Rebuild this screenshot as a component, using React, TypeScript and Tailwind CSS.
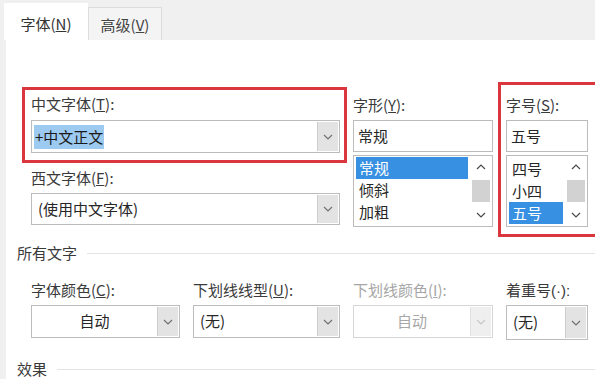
import type { ReactNode } from "react";

const FONT = `font-["Noto_Sans_CJK_SC","Noto_Sans",sans-serif]`;

function Chevron({ up = false, className = "" }: { up?: boolean; className?: string }) {
  return (
    <svg width="10" height="6" viewBox="0 0 10 6" className={className}>
      <path d={up ? "M1 5l4-4 4 4" : "M1 1l4 4 4-4"} fill="none" stroke="currentColor" strokeWidth="1.2" />
    </svg>
  );
}

function Label({ children, disabled = false }: { children: ReactNode; disabled?: boolean }) {
  return (
    <div className={`h-[20px] leading-[20px] whitespace-nowrap ${disabled ? "text-[#a6a6a6]" : "text-[#3a3a3a]"}`}>
      {children}
    </div>
  );
}

function Combo({
  children,
  className = "",
  center = false,
  disabled = false,
}: {
  children: ReactNode;
  className?: string;
  center?: boolean;
  disabled?: boolean;
}) {
  return (
    <div
      className={`flex border bg-white ${disabled ? "border-[#d6d6d6] text-[#a8a8a8]" : "border-[#bcbcbc] text-[#262626]"} ${className}`}
    >
      <div className={`flex flex-1 items-center overflow-hidden whitespace-nowrap ${center ? "justify-center" : "pl-[6px]"}`}>
        {children}
      </div>
      <div
        className={`my-px mr-px flex w-[21px] items-center justify-center border-l ${disabled ? "border-[#e2e2e2] bg-[#efefef] text-[#c8c8c8]" : "border-[#cdcdcd] bg-[#e3e3e3] text-[#707070]"}`}
      >
        <Chevron />
      </div>
    </div>
  );
}

function ListBox({ items, selected, pt }: { items: string[]; selected: number; pt: string }) {
  return (
    <div className="mt-[3px] flex h-[72px] border border-[#bcbcbc] bg-white">
      <div className={`flex-1 px-[2px] ${pt}`}>
        {items.map((it, i) => (
          <div
            key={it}
            className={`h-[22px] pl-[3px] leading-[22px] ${i === selected ? "bg-[#3790e2] text-white" : "text-[#262626]"}`}
          >
            {it}
          </div>
        ))}
      </div>
      <div className="flex w-[22px] flex-col">
        <div className="flex h-[22px] items-center justify-center text-[#4a4a4a]">
          <Chevron up />
        </div>
        <div className="mx-[2px] mt-[2px] h-[22px] bg-[#d2d2d2]" />
        <div className="mt-[2px] flex h-[22px] items-center justify-center text-[#4a4a4a]">
          <Chevron />
        </div>
      </div>
    </div>
  );
}

function Section({ title }: { title: string }) {
  return (
    <div className="flex h-[20px] items-center pl-[11px]">
      <span className="leading-[20px] text-[#3a3a3a]">{title}</span>
      <div className="ml-[10px] h-px flex-1 bg-[#e4e4e4]" />
    </div>
  );
}

export default function App() {
  return (
    <div className={`flex h-[379px] w-[595px] flex-col overflow-hidden bg-[#f0f0f0] text-[15px] ${FONT}`}>
      {/* tabs */}
      <div className="flex h-[40px] shrink-0 items-end pl-[4px]">
        <div className="flex h-[37px] w-[84px] items-center justify-center bg-white pt-[6px] text-[#333]">
          字体(<u>N</u>)
        </div>
        <div className="flex h-[33px] w-[74px] items-center justify-center border border-b-0 border-[#dcdcdc] bg-[#f4f4f4] pt-[3px] text-[#444]">
          高级(<u>V</u>)
        </div>
      </div>

      <div className="ml-[6px] flex-1 overflow-hidden bg-white">
        {/* top block */}
        <div className="mt-[42px] flex items-start pl-[16px]">
          <div className="mt-[5px] w-[325px] shrink-0">
            <div className="border-[3px] border-[#d9363e] pt-[4px] pb-[7px] pl-[6px]">
              <Label>
                中文字体(<u>T</u>):
              </Label>
              <Combo className="mt-[6px] h-[33px] w-[309px]">
                <span className="-ml-[4px] bg-[#9dcaf0] px-[1px] leading-[24px] text-[#1a1a1a]">+中文正文</span>
              </Combo>
            </div>
            <div className="pl-[9px]">
              <div className="mt-[5px]">
                <Label>
                  西文字体(<u>F</u>):
                </Label>
              </div>
              <Combo className="mt-[5px] h-[32px] w-[309px]">(使用中文字体)</Combo>
            </div>
          </div>

          <div className="ml-[6px] w-[140px] shrink-0 pt-[13px]">
            <Label>
              字形(<u>Y</u>):
            </Label>
            <div className="mt-[5px] flex h-[32px] items-center border border-[#bcbcbc] pl-[4px] text-[#262626]">常规</div>
            <ListBox items={["常规", "倾斜", "加粗"]} selected={0} pt="pt-[1px]" />
          </div>

          <div className="ml-[5px] w-[110px] shrink-0 border-[3px] border-[#d9363e] pt-[10px] pb-[7px] pl-[5px]">
            <Label>
              字号(<u>S</u>):
            </Label>
            <div className="w-[82px]">
              <div className="mt-[5px] flex h-[32px] items-center border border-[#bcbcbc] pl-[4px] text-[#262626]">五号</div>
              <ListBox items={["四号", "小四", "五号"]} selected={2} pt="pt-[2px]" />
            </div>
          </div>
        </div>

        {/* all text */}
        <div className="mt-[6px]">
          <Section title="所有文字" />
        </div>
        <div className="mt-[17px] flex gap-[13px] pl-[25px]">
          <div className="w-[149px]">
            <Label>
              字体颜色(<u>C</u>):
            </Label>
            <Combo center className="mt-[5px] h-[33px]">
              自动
            </Combo>
          </div>
          <div className="w-[147px]">
            <Label>
              下划线线型(<u>U</u>):
            </Label>
            <Combo className="mt-[5px] h-[33px]">(无)</Combo>
          </div>
          <div className="w-[140px]">
            <Label disabled>
              下划线颜色(<u>I</u>):
            </Label>
            <Combo center disabled className="mt-[5px] h-[33px]">
              自动
            </Combo>
          </div>
          <div className="w-[82px]">
            <Label>
              着重号<span className='font-["Liberation_Sans",sans-serif]'>(·):</span>
            </Label>
            <Combo className="mt-[5px] h-[35px]">(无)</Combo>
          </div>
        </div>

        <div className="mt-[19px]">
          <Section title="效果" />
        </div>
      </div>
    </div>
  );
}
